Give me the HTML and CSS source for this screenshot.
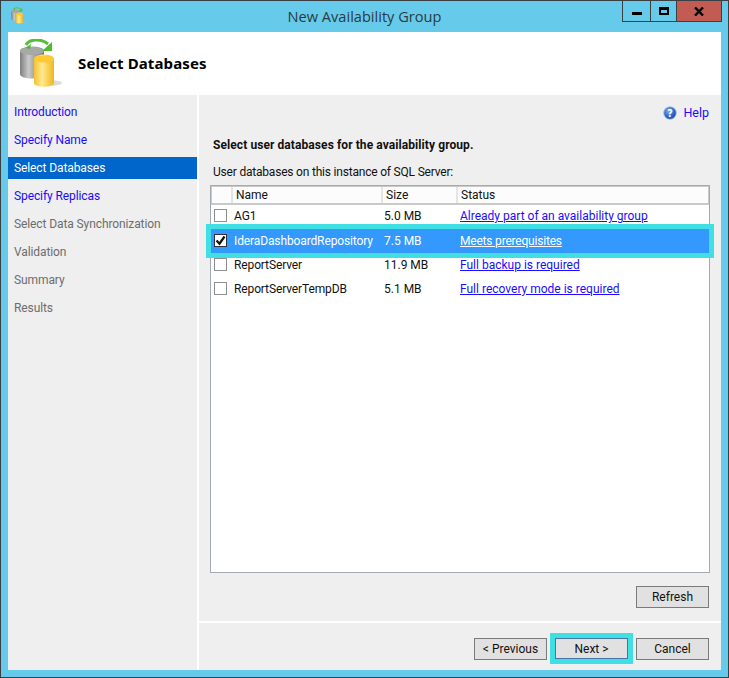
FILE: index.html
```html
<!DOCTYPE html>
<html lang="en">
<head>
<meta charset="utf-8">
<title>New Availability Group</title>
<link rel="stylesheet" href="styles.css">
</head>
<body>
<svg class="defs" width="0" height="0" aria-hidden="true">
  <defs>
    <linearGradient id="gray" x1="0" x2="1" y1="0" y2="0">
      <stop offset="0" stop-color="#7d7d7d"/><stop offset=".35" stop-color="#c9c9c9"/><stop offset="1" stop-color="#6f6f6f"/>
    </linearGradient>
    <linearGradient id="gold" x1="0" x2="1" y1="0" y2="0">
      <stop offset="0" stop-color="#f5c02e"/><stop offset=".4" stop-color="#ffe98f"/><stop offset="1" stop-color="#f2b61f"/>
    </linearGradient>
    <radialGradient id="help" cx=".4" cy=".35" r=".75">
      <stop offset="0" stop-color="#7fb0ee"/><stop offset=".6" stop-color="#2a62c4"/><stop offset="1" stop-color="#1c3f94"/>
    </radialGradient>
    <symbol id="dbs" viewBox="0 0 44 48">
      <ellipse cx="30" cy="44" rx="13" ry="3" fill="#bdbdbd" opacity=".55"/>
      <path d="M1 12c0-6 24-6 24 0v23c0 6-24 6-24 0z" fill="url(#gray)"/>
      <ellipse cx="13" cy="12" rx="12" ry="4" fill="#a8a8a8"/>
      <path d="M15 20c0-6 20-6 20 0v24c0 5-20 5-20 0z" fill="url(#gold)"/>
      <ellipse cx="25" cy="20" rx="10" ry="3.6" fill="#ffc933"/>
      <path d="M7 6C10 0 22-1 29 5" fill="none" stroke="#55bf35" stroke-width="3"/>
      <path d="M33 12H23L33 3z" fill="#4cbb2e"/>
      <path d="M6 9l6-4-1 5z" fill="#4cbb2e"/>
    </symbol>
  </defs>
</svg>
<div class="window">
  <header class="titlebar">
    <div class="title-left">
      <svg class="app-icon" width="15" height="17" viewBox="0 0 44 48"><use href="#dbs"/></svg>
    </div>
    <div class="title-text">New Availability Group</div>
    <div class="controls">
      <div class="ctl ctl-min"><span class="glyph-min"></span></div>
      <div class="ctl ctl-max"><span class="glyph-max"></span></div>
      <div class="ctl ctl-close">
        <svg width="10" height="9" viewBox="0 0 10 9"><path d="M1 .5l8 8M9 .5l-8 8" stroke="#000" stroke-width="2.4" fill="none"/></svg>
      </div>
    </div>
  </header>
  <main class="client">
    <section class="banner">
      <svg class="banner-icon" width="44" height="48" viewBox="0 0 44 48"><use href="#dbs"/></svg>
      <h1 class="banner-title">Select Databases</h1>
    </section>
    <div class="body">
      <nav class="steps">
        <a class="step link">Introduction</a>
        <a class="step link">Specify Name</a>
        <a class="step current">Select Databases</a>
        <a class="step link">Specify Replicas</a>
        <a class="step off">Select Data Synchronization</a>
        <a class="step off">Validation</a>
        <a class="step off">Summary</a>
        <a class="step off">Results</a>
      </nav>
      <section class="page">
        <div class="page-main">
          <div class="help-row">
            <svg class="help-icon" width="14" height="14" viewBox="0 0 16 16">
              <circle cx="8" cy="8" r="7.2" fill="url(#help)" stroke="#a9c3e6"/>
              <text x="8" y="12" class="help-q">?</text>
            </svg>
            <a class="help-link">Help</a>
          </div>
          <p class="lead">Select user databases for the availability group.</p>
          <p class="sub">User databases on this instance of SQL Server:</p>
          <div class="table">
            <div class="row head">
              <div class="c c0"></div>
              <div class="c c1">Name</div>
              <div class="c c2">Size</div>
              <div class="c c3">Status</div>
            </div>
            <div class="row row-first">
              <div class="c c0"><span class="check"></span></div>
              <div class="c c1">AG1</div>
              <div class="c c2">5.0 MB</div>
              <div class="c c3"><a class="status">Already part of an availability group</a></div>
            </div>
            <div class="row selected">
              <div class="c c0"><span class="check checked"><svg width="11" height="11" viewBox="0 0 11 11"><path d="M1.5 5.5l3 3.2 5-7.2" fill="none" stroke="#111" stroke-width="2.2"/></svg></span></div>
              <div class="c c1">IderaDashboardRepository</div>
              <div class="c c2">7.5 MB</div>
              <div class="c c3"><a class="status">Meets prerequisites</a></div>
            </div>
            <div class="row">
              <div class="c c0"><span class="check"></span></div>
              <div class="c c1">ReportServer</div>
              <div class="c c2">11.9 MB</div>
              <div class="c c3"><a class="status">Full backup is required</a></div>
            </div>
            <div class="row">
              <div class="c c0"><span class="check"></span></div>
              <div class="c c1">ReportServerTempDB</div>
              <div class="c c2">5.1 MB</div>
              <div class="c c3"><a class="status">Full recovery mode is required</a></div>
            </div>
          </div>
          <div class="refresh-row"><button class="btn">Refresh</button></div>
        </div>
        <footer class="footer">
          <button class="btn">&lt; Previous</button>
          <button class="btn btn-next">Next &gt;</button>
          <button class="btn">Cancel</button>
        </footer>
      </section>
    </div>
  </main>
</div>
</body>
</html>
```
FILE: styles.css
```css
* { box-sizing: border-box; }
html, body { margin: 0; padding: 0; }
body { width: 729px; height: 678px; overflow: hidden; font-family: Roboto, "Noto Sans", sans-serif; font-size: 12px; color: #111; }
.defs { position: absolute; }
.window { width: 729px; height: 678px; border: 1px solid #3a3f44; background: #66cbea; display: flex; flex-direction: column; }
.titlebar { height: 30px; display: grid; grid-template-columns: 1fr auto 1fr; flex: none; }
.title-left { padding: 6px 0 0 10px; }
.app-icon { display: block; }
.title-text { font-size: 14.6px; line-height: 30px; color: #2a3a44; font-family: "Open Sans", sans-serif; }
.controls { justify-self: end; display: flex; height: 21px; margin-right: 6px; border: 1px solid #3a3f44; border-top: 0; }
.ctl { display: flex; align-items: center; justify-content: center; border-left: 1px solid #3a3f44; }
.ctl:first-child { border-left: 0; }
.ctl-min { width: 27px; }
.ctl-max { width: 26px; }
.ctl-close { width: 45px; background: #c25c52; }
.glyph-min { width: 10px; height: 3px; background: #000; margin-top: 5px; }
.glyph-max { width: 10px; height: 8px; border: 2px solid #000; border-top-width: 3px; }
.client { margin: 0 7px 7px; flex: 1; display: flex; flex-direction: column; background: #fff; border-top: 1px solid #9db4c2; min-height: 0; }
.banner { height: 63px; flex: none; display: flex; align-items: flex-start; background: #fff; padding-left: 11px; }
.banner-icon { margin-top: 7px; flex: none; }
.banner-title { margin: 21px 0 0 15px; font: bold 15px/20px "Noto Sans", sans-serif; letter-spacing: .12px; color: #000; }
.body { flex: 1; display: flex; gap: 2px; min-height: 0; }
.steps { width: 189px; flex: none; background: #efefef; padding-top: 3px; display: flex; flex-direction: column; }
.step { height: 28px; padding: 0 6px; line-height: 28px; white-space: nowrap; letter-spacing: -.1px; }
.step.link { color: #1a0dff; }
.step.current { height: 22px; line-height: 22px; margin: 3px 0; background: #0066cc; color: #fff; }
.step.off { color: #6d6d6d; }
.page { flex: 1; display: flex; flex-direction: column; background: #efefef; min-width: 0; }
.page-main { flex: 1; border-bottom: 2px solid #fff; padding: 0 11px 0 11px; display: flex; flex-direction: column; min-height: 0; }
.help-row { height: 34px; display: flex; justify-content: flex-end; align-items: center; gap: 6px; padding: 1px 1px 0 0; }
.help-icon { display: block; }
.help-q { font: bold 11px "DejaVu Sans", sans-serif; fill: #fff; text-anchor: middle; }
.help-link { color: #1a0dff; font-size: 12.5px; }
.lead { margin: 8px 0 0 3px; height: 16px; line-height: 16px; font-weight: 700; font-size: 12px; letter-spacing: .08px; color: #111; }
.sub { margin: 11px 0 0 3px; height: 16px; line-height: 16px; letter-spacing: -.2px; color: #111; }
.table { margin-top: 5px; height: 390px; flex: none; border: 1px solid #a4a9b4; background: #fff; position: relative; }
.row { display: grid; grid-template-columns: 20px 150px 76px 1fr; height: 24px; align-items: center; white-space: nowrap; }
.row.head { grid-template-columns: 19px 150px 75px 1fr; height: 19px; background: #fcfcfc; border: 1px solid #c9c9c9; border-width: 1px 1px 2px; }
.row.head .c { border-left: 2px solid #e4e4e4; height: 100%; line-height: 16px; padding-left: 3px; }
.row.head .c0 { border-left: 0; }
.row-first { padding-bottom: 2px; }
.c1 { padding-left: 3px; letter-spacing: -.12px; }
.c2 { padding-left: 3px; }
.c3 { padding-left: 3px; }
.row.head .c1 { letter-spacing: 0; }
.c0 { display: flex; justify-content: center; padding-left: 0; padding-right: 1px; }
.check { width: 13px; height: 13px; border: 1px solid #8f8f8f; background: #fff; display: block; margin-top: -2px; }
.check.checked { display: flex; align-items: center; justify-content: center; border-color: #333; }
.status { color: #1a0dff; text-decoration: underline; }
.row.selected { background: #3399ff; color: #fff; outline: 5px solid #40dfe3; position: relative; z-index: 1; }
.row.selected .status { color: #fff; letter-spacing: -.2px; }
.refresh-row { display: flex; justify-content: flex-end; margin-top: 13px; padding-right: 1px; }
.btn { width: 73px; height: 22px; padding: 0; background: #e1e1e1; border: 1px solid #7a7a7a; font: 12px Roboto, sans-serif; color: #111; }
.footer { height: 47px; flex: none; display: flex; justify-content: flex-end; gap: 8px; padding: 15px 12px 0 0; }
.btn-next { height: 21px; border-color: #4a74a8; outline: 5px solid #40dfe3; }
.table { height: 388px; }
```
